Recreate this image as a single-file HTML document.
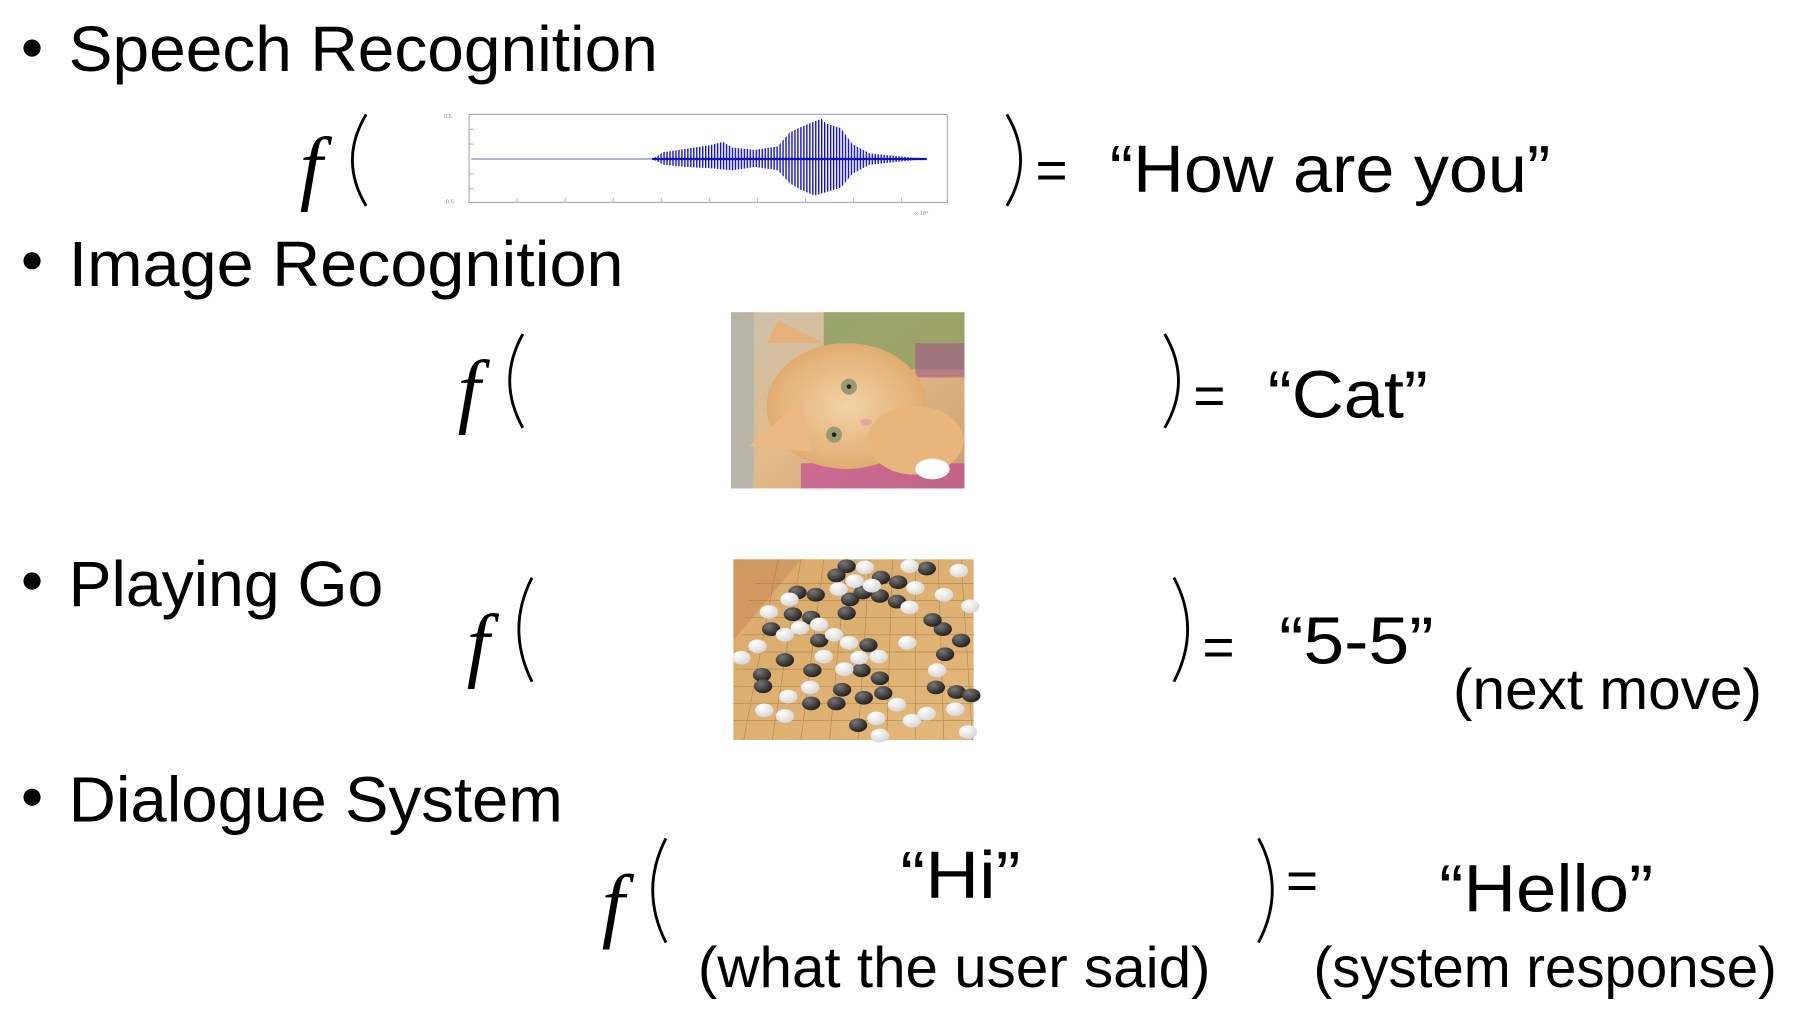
<!DOCTYPE html>
<html><head><meta charset="utf-8"><style>
html,body{margin:0;padding:0;background:#fff;overflow:hidden}
svg{display:block}
text{font-family:"Liberation Sans",sans-serif;fill:#000}
.f{font-family:"Liberation Serif",serif;font-style:italic}
</style></head><body>
<svg width="1794" height="1018" viewBox="0 0 1568 890" preserveAspectRatio="none" xmlns="http://www.w3.org/2000/svg">
<defs>
<linearGradient id="catbg" x1="0" y1="0" x2="1" y2="1">
<stop offset="0" stop-color="#c9c2b0"/><stop offset="0.5" stop-color="#e2b988"/><stop offset="1" stop-color="#c8a070"/></linearGradient>
<radialGradient id="catface" cx="0.5" cy="0.5" r="0.5"><stop offset="0" stop-color="#f3d2a6"/><stop offset="1" stop-color="#e0ac70"/></radialGradient>
<linearGradient id="board" x1="0" y1="0" x2="1" y2="1"><stop offset="0" stop-color="#d9a968"/><stop offset="1" stop-color="#e3b87a"/></linearGradient>
<radialGradient id="bs" cx="0.35" cy="0.3" r="0.7"><stop offset="0" stop-color="#777"/><stop offset="1" stop-color="#222"/></radialGradient>
<radialGradient id="ws" cx="0.35" cy="0.3" r="0.7"><stop offset="0" stop-color="#fff"/><stop offset="1" stop-color="#d8d8d8"/></radialGradient>
<pattern id="spk" width="2.6" height="10" patternUnits="userSpaceOnUse"><rect width="1.2" height="10" fill="#0a0ae6"/></pattern>
</defs>

<!-- Speech Recognition -->
<circle cx="28" cy="42" r="7.5" fill="#000"/>
<text x="60" y="62" font-size="56" textLength="515" lengthAdjust="spacingAndGlyphs">Speech Recognition</text>
<text class="f" x="262" y="170" font-size="72">f</text>
<path d="M320,100 Q296,140 320,180" fill="none" stroke="#000" stroke-width="2.5"/>
<!-- waveform -->
<rect x="410" y="100" width="418" height="77" fill="#fff" stroke="#aaa" stroke-width="1"/>
<g stroke="#bbb" stroke-width="1">
<path d="M410,113h4M410,126h4M410,152h4M410,165h4M452,177v-4M494,177v-4M536,177v-4M578,177v-4M620,177v-4M662,177v-4M704,177v-4M746,177v-4M788,177v-4"/>
</g>
<g font-size="5"><text x="388" y="103" style="fill:#888">0.5</text><text x="388" y="178" style="fill:#888">-0.5</text><text x="800" y="188" style="fill:#888">x 10⁴</text></g>
<line x1="412" y1="139" x2="810" y2="139" stroke="#8888cc" stroke-width="1"/>
<path d="M570,139 L580,133 L600,130 L620,127 L632,124 L640,129 L660,131 L680,128 L690,116 L700,111 L712,106 L718,104 L722,108 L735,112 L745,126 L760,134 L790,137 L810,139 L790,141 L760,144 L745,152 L735,164 L722,168 L712,171 L700,166 L690,160 L680,149 L660,146 L640,149 L620,147 L600,146 L580,144 Z" fill="url(#spk)"/>
<line x1="570" y1="139" x2="810" y2="139" stroke="#0a0ae6" stroke-width="2"/>
<path d="M880,100 Q904,140 880,180" fill="none" stroke="#000" stroke-width="2.5"/>
<text x="905" y="165" font-size="48">=</text>
<text x="970" y="168" font-size="58" textLength="385" lengthAdjust="spacingAndGlyphs">“How are you”</text>

<!-- Image Recognition -->
<circle cx="28" cy="228" r="7.5" fill="#000"/>
<text x="60" y="250" font-size="56" textLength="485" lengthAdjust="spacingAndGlyphs">Image Recognition</text>
<text class="f" x="400" y="365" font-size="72">f</text>
<path d="M457,292 Q434,333 457,374" fill="none" stroke="#000" stroke-width="2.5"/>
<g>
<rect x="639" y="273" width="204" height="154" fill="url(#catbg)"/>
<rect x="639" y="273" width="20" height="154" fill="#b8b6a8"/>
<rect x="720" y="273" width="123" height="50" fill="#7f9a5a" opacity="0.7"/>
<rect x="800" y="300" width="43" height="30" fill="#a05a8a" opacity="0.6"/>
<rect x="700" y="405" width="143" height="22" fill="#c03a9a" opacity="0.6"/>
<ellipse cx="740" cy="355" rx="70" ry="55" fill="url(#catface)"/>
<path d="M670,300 L680,280 L720,300 Z" fill="#e6b07a"/>
<path d="M655,390 L700,350 L710,395 Z" fill="#ebb885"/>
<ellipse cx="800" cy="385" rx="42" ry="30" fill="#e8b57a"/>
<ellipse cx="815" cy="410" rx="15" ry="9" fill="#fff"/>
<circle cx="742" cy="338" r="7" fill="#9a9a70"/><circle cx="742" cy="338" r="2" fill="#222"/>
<circle cx="729" cy="380" r="7" fill="#9a9a70"/><circle cx="729" cy="380" r="2" fill="#222"/>
<ellipse cx="757" cy="369" rx="5" ry="3" fill="#e7a6a0"/>
</g>
<path d="M1018,292 Q1042,333 1018,374" fill="none" stroke="#000" stroke-width="2.5"/>
<text x="1043" y="362" font-size="48">=</text>
<text x="1108" y="365" font-size="58" textLength="140" lengthAdjust="spacingAndGlyphs">“Cat”</text>

<!-- Playing Go -->
<circle cx="28" cy="508" r="7.5" fill="#000"/>
<text x="60" y="530" font-size="56" textLength="275" lengthAdjust="spacingAndGlyphs">Playing Go</text>
<text class="f" x="408" y="587" font-size="72">f</text>
<path d="M465,505 Q442,550 465,596" fill="none" stroke="#000" stroke-width="2.5"/>
<g>
<rect x="641" y="489" width="210" height="158" fill="url(#board)"/>
<path d="M641,489 L700,489 L641,560 Z" fill="#c9875a" opacity="0.5"/>
<g stroke="#a07a40" stroke-width="0.6" opacity="0.7">
<path d="M660,510H851M655,525H851M652,540H851M648,555H851M645,570H851M643,585H851M641,600H851M641,615H851M641,630H851"/>
<path d="M680,489L650,647M700,489L675,647M720,489L700,647M740,489L725,647M760,489L750,647M780,489L775,647M800,489L800,647M820,489L825,647M840,489L850,647"/>
</g>
<g fill="url(#bs)">
<ellipse cx="740" cy="495" rx="8" ry="6"/><ellipse cx="731" cy="503" rx="8" ry="6"/><ellipse cx="770" cy="505" rx="8" ry="6"/><ellipse cx="810" cy="497" rx="8" ry="6"/><ellipse cx="785" cy="509" rx="8" ry="6"/>
<ellipse cx="697" cy="518" rx="8" ry="6"/><ellipse cx="713" cy="520" rx="8" ry="6"/><ellipse cx="743" cy="524" rx="8" ry="6"/><ellipse cx="769" cy="521" rx="8" ry="6"/><ellipse cx="784" cy="526" rx="8" ry="6"/><ellipse cx="754" cy="518" rx="8" ry="6"/>
<ellipse cx="693" cy="537" rx="8" ry="6"/><ellipse cx="709" cy="540" rx="8" ry="6"/><ellipse cx="740" cy="536" rx="8" ry="6"/><ellipse cx="824" cy="550" rx="8" ry="6"/><ellipse cx="815" cy="542" rx="8" ry="6"/><ellipse cx="840" cy="560" rx="8" ry="6"/>
<ellipse cx="674" cy="550" rx="8" ry="6"/><ellipse cx="716" cy="560" rx="8" ry="6"/><ellipse cx="759" cy="564" rx="8" ry="6"/><ellipse cx="826" cy="572" rx="8" ry="6"/>
<ellipse cx="686" cy="577" rx="8" ry="6"/><ellipse cx="710" cy="586" rx="8" ry="6"/><ellipse cx="666" cy="590" rx="8" ry="6"/><ellipse cx="667" cy="600" rx="8" ry="6"/><ellipse cx="753" cy="586" rx="8" ry="6"/>
<ellipse cx="769" cy="593" rx="8" ry="6"/><ellipse cx="736" cy="603" rx="8" ry="6"/><ellipse cx="755" cy="610" rx="8" ry="6"/><ellipse cx="772" cy="606" rx="8" ry="6"/><ellipse cx="818" cy="601" rx="8" ry="6"/><ellipse cx="836" cy="605" rx="8" ry="6"/><ellipse cx="849" cy="608" rx="8" ry="6"/>
<ellipse cx="709" cy="615" rx="8" ry="6"/><ellipse cx="731" cy="615" rx="8" ry="6"/><ellipse cx="750" cy="634" rx="8" ry="6"/>
</g>
<g fill="url(#ws)">
<ellipse cx="756" cy="496" rx="8" ry="6"/><ellipse cx="795" cy="495" rx="8" ry="6"/><ellipse cx="838" cy="499" rx="8" ry="6"/><ellipse cx="747" cy="508" rx="8" ry="6"/><ellipse cx="800" cy="514" rx="8" ry="6"/>
<ellipse cx="733" cy="515" rx="8" ry="6"/><ellipse cx="762" cy="512" rx="8" ry="6"/><ellipse cx="795" cy="531" rx="8" ry="6"/><ellipse cx="825" cy="520" rx="8" ry="6"/><ellipse cx="848" cy="530" rx="8" ry="6"/>
<ellipse cx="690" cy="524" rx="8" ry="6"/><ellipse cx="672" cy="535" rx="8" ry="6"/><ellipse cx="686" cy="555" rx="8" ry="6"/><ellipse cx="699" cy="549" rx="8" ry="6"/><ellipse cx="716" cy="546" rx="8" ry="6"/>
<ellipse cx="729" cy="555" rx="8" ry="6"/><ellipse cx="742" cy="562" rx="8" ry="6"/><ellipse cx="768" cy="574" rx="8" ry="6"/><ellipse cx="793" cy="562" rx="8" ry="6"/><ellipse cx="819" cy="586" rx="8" ry="6"/>
<ellipse cx="662" cy="565" rx="8" ry="6"/><ellipse cx="648" cy="575" rx="8" ry="6"/><ellipse cx="720" cy="574" rx="8" ry="6"/><ellipse cx="738" cy="585" rx="8" ry="6"/><ellipse cx="751" cy="575" rx="8" ry="6"/>
<ellipse cx="708" cy="601" rx="8" ry="6"/><ellipse cx="689" cy="609" rx="8" ry="6"/><ellipse cx="668" cy="621" rx="8" ry="6"/><ellipse cx="686" cy="626" rx="8" ry="6"/><ellipse cx="784" cy="616" rx="8" ry="6"/>
<ellipse cx="766" cy="628" rx="8" ry="6"/><ellipse cx="810" cy="624" rx="8" ry="6"/><ellipse cx="835" cy="620" rx="8" ry="6"/><ellipse cx="846" cy="640" rx="8" ry="6"/><ellipse cx="797" cy="630" rx="8" ry="6"/><ellipse cx="769" cy="643" rx="8" ry="6"/>
</g>
</g>
<path d="M1026,505 Q1050,550 1026,596" fill="none" stroke="#000" stroke-width="2.5"/>
<text x="1051" y="582" font-size="48">=</text>
<text x="1118" y="580" font-size="58" textLength="135" lengthAdjust="spacingAndGlyphs">“5-5”</text>
<text x="1270" y="620" font-size="50" textLength="270" lengthAdjust="spacingAndGlyphs">(next move)</text>

<!-- Dialogue System -->
<circle cx="28" cy="697" r="7.5" fill="#000"/>
<text x="60" y="718" font-size="56" textLength="432" lengthAdjust="spacingAndGlyphs">Dialogue System</text>
<text class="f" x="526" y="815" font-size="72">f</text>
<path d="M582,733 Q559,778 582,824" fill="none" stroke="#000" stroke-width="2.5"/>
<text x="787" y="785" font-size="58" textLength="105" lengthAdjust="spacingAndGlyphs">“Hi”</text>
<path d="M1100,733 Q1124,778 1100,824" fill="none" stroke="#000" stroke-width="2.5"/>
<text x="1124" y="786" font-size="48">=</text>
<text x="1258" y="797" font-size="58" textLength="187" lengthAdjust="spacingAndGlyphs">“Hello”</text>
<text x="610" y="863" font-size="50" textLength="448" lengthAdjust="spacingAndGlyphs">(what the user said)</text>
<text x="1148" y="863" font-size="50" textLength="405" lengthAdjust="spacingAndGlyphs">(system response)</text>
</svg>
</body></html>
